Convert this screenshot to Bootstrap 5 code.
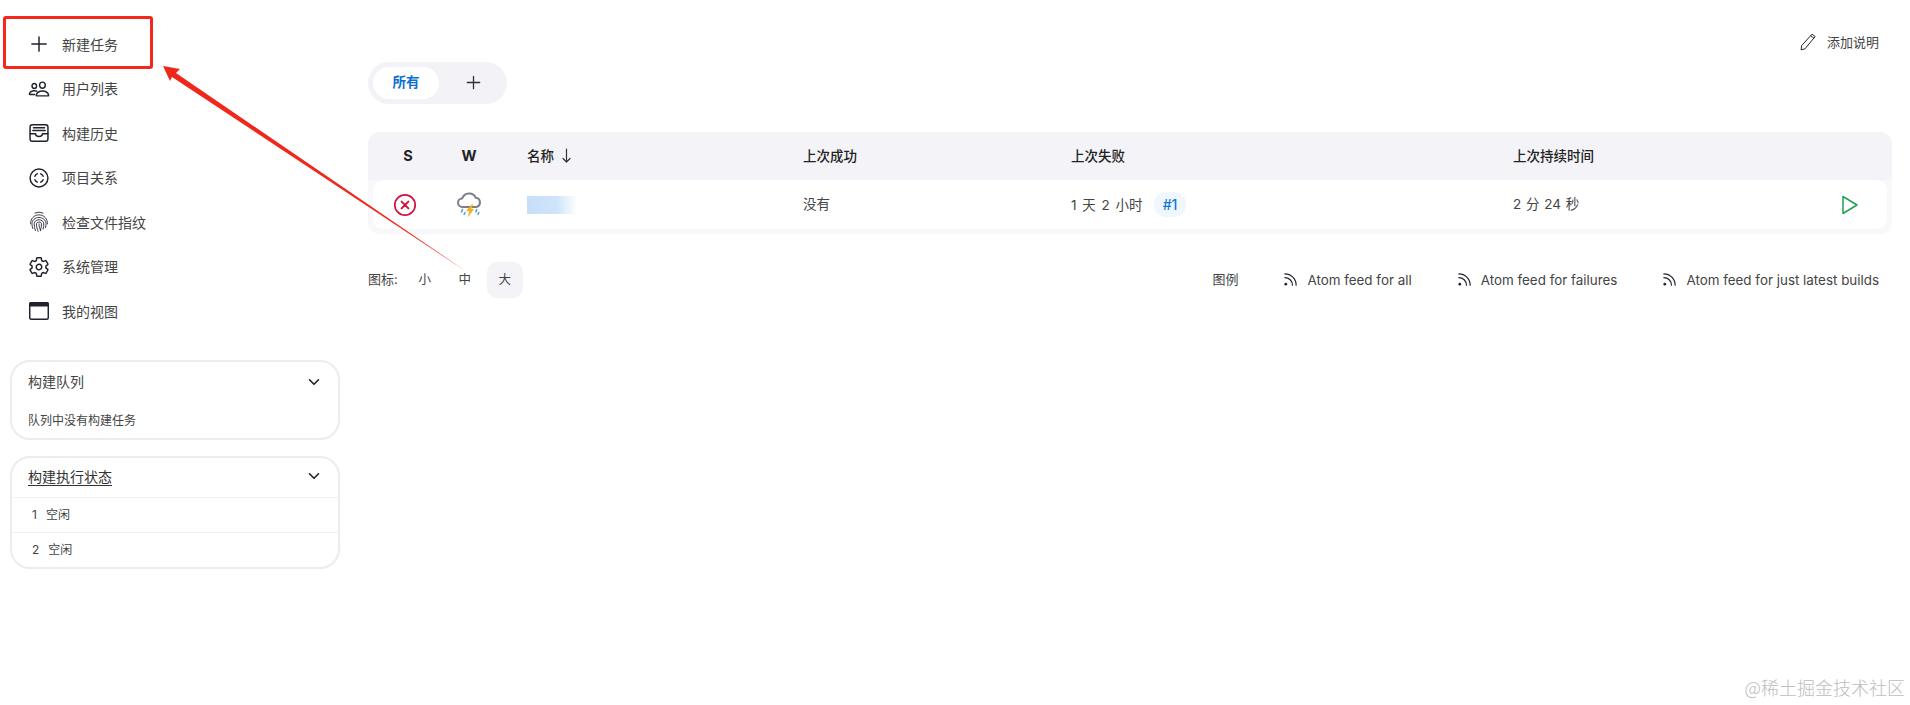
<!DOCTYPE html>
<html lang="zh-CN">
<head>
  <meta charset="UTF-8">
  <meta name="viewport" content="width=device-width, initial-scale=1.0">
  <title>Jenkins</title>
  <link href="https://cdn.jsdelivr.net/npm/bootstrap@5.3.0/dist/css/bootstrap.min.css" rel="stylesheet">
  <style>
    html, body { height: 705px; overflow: hidden; }
    body { font-family: Inter, "Noto Sans CJK SC", sans-serif; font-size: 13px; color: #333; background: #fff; position: relative; }
    svg.ico { fill: none; stroke: currentColor; stroke-width: 34; stroke-linecap: round; stroke-linejoin: round; flex: none; }

    .side-col { width: 349px; padding: 22px 0 0 10px; flex: none; }
    .side-link { height: 44.5px; padding-left: 18px; font-size: 14px; color: #444; text-decoration: none; gap: 12px; }
    .side-link svg { width: 22px; height: 22px; color: #20222c; }
    .side-boxes { margin-top: 26px; }
    .side-box { border: 2px solid #ebebf0; border-radius: 20px; width: 330px; margin-bottom: 16px; background: #fff; }
    .side-head { height: 40px; padding: 0 16px; font-size: 14px; color: #444; }
    .side-head.side-head-tight { height: 39px; padding-bottom: 2px; }
    .side-head svg { width: 16px; height: 16px; color: #20222c; stroke-width: 52; }
    .side-note { padding: 2px 16px 0; font-size: 12px; color: #444; height: 36px; }
    .side-title-link { color: #333; text-decoration: underline; text-underline-offset: 3px; }
    .exec-row { height: 35px; border-top: 1px solid #f1f1f4; padding-left: 20px; font-size: 12px; gap: 9px; color: #444; }

    .main-col { padding-right: 18px; padding-left: 19px; min-width: 0; }
    .desc-link { height: 84px; padding: 33px 13px 0 0; color: #444; gap: 10px; font-size: 13px; }
    .desc-link svg { width: 18px; height: 18px; color: #20222c; }

    .tab-pill { background: #f3f3f7; border-radius: 21px; height: 42px; width: 139px; padding: 5px; margin-top: -22px; }
    .tab-on { width: 66px; height: 32px; padding-bottom: 1px; background: #fff; border-radius: 16px; color: #0b6fd0; font-weight: 600; font-size: 13.5px; }
    .tab-add { flex: 1; padding: 0 0 1px 5px; color: #333; }
    .tab-add svg { width: 19px; height: 19px; stroke-width: 36; }

    .job-wrap { background: linear-gradient(#f4f4f8 48px, #f8f8fb 48px); border-radius: 12px; padding: 0 5px 5px; margin-top: 28px; width: 1524px; }
    .job-table { table-layout: fixed; width: 1514px; border-collapse: separate; border-spacing: 0; --bs-table-bg: transparent; margin: 0; }
    .job-table th { height: 48px; padding: 0; vertical-align: middle; font-size: 13.5px; font-weight: 500; color: #222; border: 0; }
    .job-table td { height: 49px; padding: 0; vertical-align: middle; background: #fff; font-size: 13.5px; color: #444; border: 0; word-spacing: 2px; }
    .job-table td.dur-cell { word-spacing: 1px; }
    .job-table td:first-child { border-radius: 10px 0 0 10px; }
    .job-table td:last-child { border-radius: 0 10px 10px 0; }
    .job-table th.hd-letter { font-weight: 700; font-size: 14.5px; text-align: center; }
    .job-table td.hd-letter { text-align: center; }
    .job-table .name-cell { padding-left: 32px; }
    .status-ico { margin-right: 6px; }
    .blur-name { display: block; width: 50px; height: 18px; background: linear-gradient(90deg, #c6dff8 0, #cfe4f9 60%, #fff 100%); }
    .build-tag { background: #eff6fd; color: #1678d6; border-radius: 12px; padding: 4px 9px; margin-left: 11px; font-weight: 500; font-size: 14px; }
    .sort-mark { margin-left: 8px; vertical-align: -2px; color: #333; }

    .foot-bar { margin-top: 28px; height: 36px; width: 1511px; color: #444; }
    .size-opt { width: 36px; height: 36px; border-radius: 10px; font-size: 12.5px; margin-left: 4px; }
    .size-opt.size-on { background: #f4f4f8; }
    .size-first { margin-left: 9px; }
    .foot-link { gap: 9px; margin-left: 45px; color: #444; font-size: 13.4px; }
    .foot-link svg { width: 15px; height: 15px; color: #20222c; }

    .mark-box { position: absolute; left: 3px; top: 16px; width: 150px; height: 53px; border: 3px solid #f5271d; border-radius: 3px; pointer-events: none; }
    .mark-arrow { position: absolute; left: 0; top: 0; pointer-events: none; }
    .water-mark { position: absolute; right: 5px; bottom: 5px; font-size: 18px; color: #bdbdbd; font-family: "Noto Sans CJK SC", sans-serif; font-weight: 300; line-height: 26px; }
  </style>
</head>
<body>
<div class="d-flex">
  <aside class="side-col">
    <nav class="d-flex flex-column">
      <a class="side-link d-flex align-items-center" href="#">
        <svg class="ico" viewBox="0 0 512 512"><path d="M256 90v332M90 256h332"/></svg>新建任务</a>
      <a class="side-link d-flex align-items-center" href="#">
        <svg class="ico" viewBox="0 0 512 512"><path d="M402 168c-2.93 40.67-33.1 72-66 72s-63.12-31.32-66-72c-3-42.31 26.37-72 66-72s69 30.46 66 72z"/><path d="M336 304c-65.17 0-127.84 32.37-143.54 95.41-2.08 8.34 3.15 16.59 11.72 16.59h263.65c8.57 0 13.77-8.25 11.72-16.59C463.85 335.36 401.18 304 336 304z"/><path d="M200 185.94c-2.34 32.48-26.72 58.06-53 58.06s-50.7-25.57-53-58.06C91.61 152.15 115.34 128 147 128s55.39 24.77 53 57.94z"/><path d="M206 306c-18.05-8.27-37.93-11.45-59-11.45-52 0-102.1 25.85-114.65 76.2-1.65 6.66 2.53 13.25 9.37 13.25H154"/></svg>用户列表</a>
      <a class="side-link d-flex align-items-center" href="#">
        <svg class="ico" viewBox="0 0 512 512"><rect x="48" y="64" width="416" height="384" rx="52"/><path d="M48 272h128a80 64 0 00160 0h128M128 136h256M112 200h288"/></svg>构建历史</a>
      <a class="side-link d-flex align-items-center" href="#">
        <svg class="ico" viewBox="0 0 512 512"><circle cx="256" cy="256" r="208"/><path d="M160 216a110 110 0 0156-56M296 160a110 110 0 0156 56M352 296a110 110 0 01-56 56M216 352a110 110 0 01-56-56"/></svg>项目关系</a>
      <a class="side-link d-flex align-items-center" href="#">
        <svg class="ico" viewBox="0 0 512 512" style="stroke-width:20"><path d="M160 48a220 220 0 01192 0M60 300c-6-120 80-210 196-210s202 90 196 210M112 410c-14-40-20-80-20-110 0-90 74-150 164-150s164 60 164 150c0 30-4 60-12 88M172 456c-18-50-28-100-28-156 0-60 50-96 112-96s112 36 112 96c0 40-4 80-16 120M236 476c-24-50-38-110-38-176 0-30 26-42 58-42s58 12 58 42c0 50-6 100-22 144M296 460c-24-50-40-100-40-160"/></svg>检查文件指纹</a>
      <a class="side-link d-flex align-items-center" href="#">
        <svg class="ico" viewBox="0 0 512 512"><path d="M262.29 192.31a64 64 0 1057.4 57.4 64.13 64.13 0 00-57.4-57.4zM416.39 256a154.34 154.34 0 01-1.53 20.79l45.21 35.46a10.81 10.81 0 012.45 13.75l-42.77 74a10.81 10.81 0 01-13.14 4.59l-44.9-18.08a16.11 16.11 0 00-15.17 1.75A164.48 164.48 0 01325 400.8a15.94 15.94 0 00-8.82 12.14l-6.73 47.89a11.08 11.08 0 01-10.68 9.17h-85.54a11.11 11.11 0 01-10.69-8.87l-6.72-47.82a16.07 16.07 0 00-9-12.22 155.3 155.3 0 01-21.46-12.57 16 16 0 00-15.11-1.71l-44.89 18.07a10.81 10.81 0 01-13.14-4.58l-42.77-74a10.8 10.8 0 012.45-13.75l38.21-30a16.05 16.05 0 006-14.08c-.36-4.17-.58-8.33-.58-12.5s.21-8.27.58-12.35a16 16 0 00-6.07-13.94l-38.19-30A10.81 10.81 0 0149.48 186l42.77-74a10.81 10.81 0 0113.14-4.59l44.9 18.08a16.11 16.11 0 0015.17-1.75A164.48 164.48 0 01187 111.2a15.94 15.94 0 008.82-12.14l6.73-47.89A11.08 11.08 0 01213.23 42h85.54a11.11 11.11 0 0110.69 8.87l6.72 47.82a16.07 16.07 0 009 12.22 155.3 155.3 0 0121.46 12.57 16 16 0 0015.11 1.71l44.89-18.07a10.81 10.81 0 0113.14 4.58l42.77 74a10.8 10.8 0 01-2.45 13.75l-38.21 30a16.05 16.05 0 00-6.07 14.08c.33 4.14.55 8.3.55 12.47z"/></svg>系统管理</a>
      <a class="side-link d-flex align-items-center" href="#">
        <svg class="ico" viewBox="0 0 512 512"><rect x="40" y="64" width="432" height="384" rx="36"/><path d="M40 100a36 36 0 0136-36h360a36 36 0 0136 36v36H40z" fill="currentColor"/></svg>我的视图</a>
    </nav>
    <div class="side-boxes">
      <section class="side-box">
        <div class="side-head d-flex align-items-center justify-content-between">构建队列
          <svg class="ico" viewBox="0 0 512 512"><path d="M112 184l144 144 144-144"/></svg></div>
        <div class="side-note d-flex align-items-center">队列中没有构建任务</div>
      </section>
      <section class="side-box">
        <div class="side-head side-head-tight d-flex align-items-center justify-content-between">
          <a class="side-title-link" href="#">构建执行状态</a>
          <svg class="ico" viewBox="0 0 512 512"><path d="M112 184l144 144 144-144"/></svg></div>
        <div class="exec-row d-flex align-items-center"><span>1</span><span>空闲</span></div>
        <div class="exec-row d-flex align-items-center"><span>2</span><span>空闲</span></div>
      </section>
    </div>
  </aside>

  <main class="main-col flex-grow-1">
    <div class="desc-link d-flex justify-content-end align-items-start">
      <svg class="ico" viewBox="0 0 512 512" style="stroke-width:28"><path d="M380 40l80 60-290 350-110 30 14-110zM340 84l82 62"/></svg>
      <span>添加说明</span>
    </div>
    <div class="tab-pill d-flex">
      <a class="tab-on d-flex align-items-center justify-content-center text-decoration-none" href="#">所有</a>
      <a class="tab-add d-flex align-items-center justify-content-center" href="#"><svg class="ico" viewBox="0 0 512 512"><path d="M256 90v332M90 256h332"/></svg></a>
    </div>

    <div class="job-wrap">
      <table class="table table-borderless job-table">
        <colgroup><col style="width:70px"><col style="width:52px"><col style="width:308px"><col style="width:268px"><col style="width:442px"><col style="width:300px"><col style="width:74px"></colgroup>
        <thead>
          <tr><th class="hd-letter">S</th><th class="hd-letter">W</th><th class="name-cell">名称<svg class="sort-mark" width="9" height="15" viewBox="0 0 9 15" fill="none" stroke="currentColor" stroke-width="1.200" stroke-linecap="round" stroke-linejoin="round"><path d="M4.500 1v13M1 10.500l3.500 3.500 3.500-3.500"/></svg></th><th>上次成功</th><th>上次失败</th><th>上次持续时间</th><th></th></tr>
        </thead>
        <tbody>
          <tr>
            <td class="hd-letter">
              <svg class="status-ico" width="24" height="24" viewBox="0 0 24 24" fill="none" stroke="#d3123f" stroke-linecap="round"><circle cx="12" cy="12" r="10.2" stroke-width="1.7"/><path d="M8.600 8.600l6.800 6.800M15.400 8.600l-6.800 6.800" stroke-width="2"/></svg>
            </td>
            <td class="hd-letter">
              <svg width="25" height="25" viewBox="0 0 25 25" fill="none" stroke-linecap="round" stroke-linejoin="round"><path d="M6 15H5.500a4.300 4.300 0 01-.3-8.600A7.300 7.300 0 0118.800 5.800 4.700 4.700 0 0119.500 15z" stroke="#7b7f87" stroke-width="2"/><path d="M14.500 13l-5 6h3.200l-1.500 5.500 5.500-7.300h-3l2-4.200z" fill="#f5b017" stroke="#f5b017" stroke-width=".6"/><path d="M5.500 17.500l-1 2.500M8 20.500l-.8 2M19.800 17.500l-1 2.500M21.800 20.500l-.8 2" stroke="#4aa3dc" stroke-width="1.500"/></svg>
            </td>
            <td class="name-cell"><span class="blur-name"></span></td>
            <td>没有</td>
            <td>1 天 2 小时<span class="build-tag">#1</span></td>
            <td class="dur-cell">2 分 24 秒</td>
            <td>
              <svg class="d-block mx-auto" width="20" height="20" viewBox="0 0 20 20" fill="none" stroke="#1ea34f" stroke-width="1.500" stroke-linejoin="round"><path d="M3 1.500v17l14-8.500z"/></svg>
            </td>
          </tr>
        </tbody>
      </table>
    </div>

    <div class="foot-bar d-flex align-items-center">
      <span>图标:</span>
      <span class="size-opt size-first d-flex align-items-center justify-content-center">小</span>
      <span class="size-opt d-flex align-items-center justify-content-center">中</span>
      <span class="size-opt size-on d-flex align-items-center justify-content-center">大</span>
      <span class="ms-auto">图例</span>
      <a class="foot-link d-flex align-items-center text-decoration-none" href="#"><svg class="ico" viewBox="0 0 512 512" style="stroke-width:40"><path d="M64 64c212 0 384 172 384 384M64 190c142 0 258 116 258 258"/><circle cx="96" cy="416" r="46" fill="currentColor" stroke="none"/></svg>Atom feed for all</a>
      <a class="foot-link d-flex align-items-center text-decoration-none" href="#"><svg class="ico" viewBox="0 0 512 512" style="stroke-width:40"><path d="M64 64c212 0 384 172 384 384M64 190c142 0 258 116 258 258"/><circle cx="96" cy="416" r="46" fill="currentColor" stroke="none"/></svg>Atom feed for failures</a>
      <a class="foot-link d-flex align-items-center text-decoration-none" href="#"><svg class="ico" viewBox="0 0 512 512" style="stroke-width:40"><path d="M64 64c212 0 384 172 384 384M64 190c142 0 258 116 258 258"/><circle cx="96" cy="416" r="46" fill="currentColor" stroke="none"/></svg>Atom feed for just latest builds</a>
    </div>
  </main>
</div>

<div class="mark-box"></div>
<svg class="mark-arrow" width="600" height="320" viewBox="0 0 600 320"><polygon points="163,66 180,69 176,73 467,272 172,77 170,81" fill="#f0281c"/></svg>
<div class="water-mark">@稀土掘金技术社区</div>

<script src="https://cdn.jsdelivr.net/npm/bootstrap@5.3.0/dist/js/bootstrap.bundle.min.js"></script>
</body>
</html>
